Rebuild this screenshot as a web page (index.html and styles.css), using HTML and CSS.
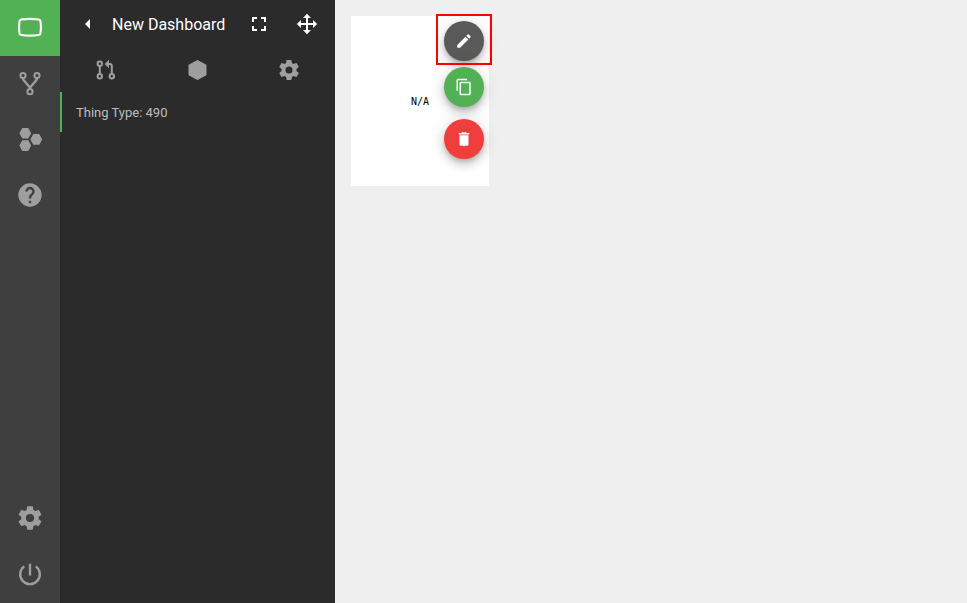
FILE: index.html
```html
<!DOCTYPE html>
<html lang="en">
<head>
<meta charset="utf-8">
<title>New Dashboard</title>
<link rel="stylesheet" href="styles.css">
</head>
<body>
<svg class="defs" aria-hidden="true">
  <symbol id="gear" viewBox="0 0 24 24"><path d="M12,15.5A3.5,3.5 0 0,1 8.5,12A3.5,3.5 0 0,1 12,8.5A3.5,3.5 0 0,1 15.5,12A3.5,3.5 0 0,1 12,15.5M19.43,12.97C19.47,12.65 19.5,12.33 19.5,12C19.5,11.67 19.47,11.34 19.43,11L21.54,9.37C21.73,9.22 21.78,8.95 21.66,8.73L19.66,5.27C19.54,5.05 19.27,4.96 19.05,5.05L16.56,6.05C16.04,5.66 15.5,5.32 14.87,5.07L14.5,2.42C14.46,2.18 14.25,2 14,2H10C9.75,2 9.54,2.18 9.5,2.42L9.13,5.07C8.5,5.32 7.96,5.66 7.44,6.05L4.95,5.05C4.73,4.96 4.46,5.05 4.34,5.27L2.34,8.73C2.21,8.95 2.27,9.22 2.46,9.37L4.57,11C4.53,11.34 4.5,11.67 4.5,12C4.5,12.33 4.53,12.65 4.57,12.97L2.46,14.63C2.27,14.78 2.21,15.05 2.34,15.27L4.34,18.73C4.46,18.95 4.73,19.03 4.95,18.95L7.44,17.94C7.96,18.34 8.5,18.68 9.13,18.93L9.5,21.58C9.54,21.82 9.75,22 10,22H14C14.25,22 14.46,21.82 14.5,21.58L14.87,18.93C15.5,18.67 16.04,18.34 16.56,17.94L19.05,18.95C19.27,19.03 19.54,18.95 19.66,18.73L21.66,15.27C21.78,15.05 21.73,14.78 21.54,14.63L19.43,12.97Z"/></symbol>
</svg>
<div class="app">
  <nav class="rail">
    <a class="rail-item active"><svg class="icon-lg line" viewBox="0 0 28 28"><path d="M5.3 5.5Q14 4.2 22.7 5.5Q24.2 5.7 24.5 7.3Q25.5 13.5 24.5 19.2Q24.2 20.8 22.7 21Q14 22.3 5.3 21Q3.8 20.8 3.5 19.2Q2.5 13.5 3.5 7.3Q3.8 5.7 5.3 5.5Z" stroke-width="2.1"/></svg></a>
    <a class="rail-item"><svg class="icon-lg line" viewBox="0 0 28 28"><circle cx="7" cy="5.5" r="2.6"/><circle cx="21" cy="5.5" r="2.6"/><circle cx="14" cy="21.7" r="2.6"/><path d="M7.2 8V9.5L14 17.7L20.8 9.5V8M14 17V19.5" stroke-width="2.3"/></svg></a>
    <a class="rail-item"><svg class="icon-lg" viewBox="0 0 28 28"><path d="M6.3 1.9H12.3L15.2 7.2L12.3 12.6H6.3L3.4 7.2ZM17.3 8.1H23.3L26.2 13.4L23.3 18.8H17.3L14.4 13.4ZM6.3 14.2H12.3L15.2 19.6L12.3 25H6.3L3.4 19.6Z"/></svg></a>
    <a class="rail-item raised"><svg class="icon-lg" viewBox="0 0 24 24"><path d="M15.07,11.25L14.17,12.17C13.45,12.89 13,13.5 13,15H11V14.5C11,13.39 11.45,12.39 12.17,11.67L13.41,10.41C13.78,10.05 14,9.55 14,9C14,7.89 13.1,7 12,7A2,2 0 0,0 10,9H8A4,4 0 0,1 12,5A4,4 0 0,1 16,9C16,9.88 15.64,10.67 15.07,11.25M13,19H11V17H13M12,2A10,10 0 0,0 2,12A10,10 0 0,0 12,22A10,10 0 0,0 22,12C22,6.47 17.5,2 12,2Z"/></svg></a>
    <span class="spacer"></span>
    <a class="rail-item raised"><svg class="icon-lg"><use href="#gear"/></svg></a>
    <a class="rail-item raised"><svg class="icon-lg line" viewBox="0 0 28 28"><path d="M14 3.8V15.4M8.2 6.4A9.8 9.8 0 1 0 19.8 6.4" stroke-width="2.4"/></svg></a>
  </nav>
  <aside class="panel">
    <header class="panel-head">
      <svg class="icon back" viewBox="0 0 24 24"><path d="M14 7V17L9 12Z"/></svg>
      <h1 class="title">New Dashboard</h1>
      <svg class="icon" viewBox="0 0 24 24"><path d="M5,5H10V7H7V10H5V5M14,5H19V10H17V7H14V5M17,14H19V19H14V17H17V14M10,17V19H5V14H7V17H10Z"/></svg>
      <svg class="icon move" viewBox="0 0 24 24"><path d="M12 1.8L16 6H13V11H18V8L22.2 12L18 16V13H13V18H16L12 22.2L8 18H11V13H6V16L1.8 12L6 8V11H11V6H8Z"/></svg>
    </header>
    <div class="tabs">
      <a class="tab"><svg class="icon line" viewBox="0 0 24 24"><circle cx="5.8" cy="5.8" r="2.2"/><circle cx="5.8" cy="18.2" r="2.2"/><circle cx="17.8" cy="18.2" r="2.2"/><path d="M5.8 8V16M17.8 16V8Q17.8 6 15.8 6H14" stroke-width="2"/><path class="solid" d="M10.6 6L15 1.8V10.2Z"/></svg></a>
      <a class="tab"><svg class="icon" viewBox="0.5 0 24 24"><path d="M21,16.5C21,16.88 20.79,17.21 20.47,17.38L12.57,21.82C12.41,21.94 12.21,22 12,22C11.79,22 11.59,21.94 11.43,21.82L3.53,17.38C3.21,17.21 3,16.88 3,16.5V7.5C3,7.12 3.21,6.79 3.53,6.62L11.43,2.18C11.59,2.06 11.79,2 12,2C12.21,2 12.41,2.06 12.57,2.18L20.47,6.62C20.79,6.79 21,7.12 21,7.5V16.5Z"/></svg></a>
      <a class="tab"><svg class="icon"><use href="#gear"/></svg></a>
    </div>
    <div class="thing">Thing Type: 490</div>
  </aside>
  <main class="canvas">
    <section class="widget">
      <span class="value">N/A</span>
      <div class="actions">
        <button class="fab edit"><svg viewBox="0 0 24 24"><path d="M20.71,7.04C21.1,6.65 21.1,6 20.71,5.63L18.37,3.29C18,2.9 17.35,2.9 16.96,3.29L15.12,5.12L18.87,8.87M3,17.25V21H6.75L17.81,9.93L14.06,6.18L3,17.25Z"/></svg></button>
        <button class="fab copy"><svg viewBox="0 0 24 24"><path d="M19,21H8V7H19M19,5H8A2,2 0 0,0 6,7V21A2,2 0 0,0 8,23H19A2,2 0 0,0 21,21V7A2,2 0 0,0 19,5M16,1H4A2,2 0 0,0 2,3V17H4V3H16V1Z"/></svg></button>
        <button class="fab delete"><svg viewBox="0 0 24 24"><path d="M19,4H15.5L14.5,3H9.5L8.5,4H5V6H19M6,19A2,2 0 0,0 8,21H16A2,2 0 0,0 18,19V7H6V19Z"/></svg></button>
      </div>
      <div class="highlight"></div>
    </section>
  </main>
</div>
</body>
</html>
```
FILE: styles.css
```css
* { box-sizing: border-box; }
body { margin: 0; font-family: Roboto, sans-serif; background: #efefef; }
.defs { position: absolute; width: 0; height: 0; }
svg { display: block; fill: currentColor; flex: none; }
.line { fill: none; stroke: currentColor; stroke-width: 2; }
.solid { fill: currentColor; stroke: none; }
.app { display: flex; height: 100vh; overflow: hidden; }

.rail { width: 60px; display: flex; flex-direction: column; background: #3f3f3f; color: #9e9e9e; }
.rail-item { height: 56px; display: flex; align-items: center; justify-content: center; }
.rail-item.active { background: #52b154; color: #fff; }
.rail-item.raised { padding-bottom: 2px; }
.spacer { flex: 1; }
.icon-lg { width: 28px; height: 28px; }
.icon { width: 24px; height: 24px; }

.panel { width: 275px; background: #2b2b2b; color: #fff; }
.panel-head { height: 48px; display: flex; align-items: center; padding: 0 16px; }
.back { margin-right: 12px; }
.title { flex: 1; margin: 0; padding-top: 2px; font-size: 16px; font-weight: 400; line-height: 24px; white-space: nowrap; }
.move { margin-left: 24px; }
.tabs { height: 44px; display: flex; color: #9e9e9e; }
.tab { flex: 1; display: flex; align-items: center; justify-content: center; }
.thing { height: 40px; padding: 0 14px; border-left: 2px solid #52b154; font-size: 13px; line-height: 41px; color: #bdbdbd; }

.canvas { flex: 1; padding: 16px; background: #efefef; }
.widget { position: relative; width: 138px; height: 170px; background: #fff; display: flex; align-items: center; justify-content: center; }
.value { padding-top: 2px; font: 10px/12px "DejaVu Sans Mono", monospace; color: #000; }
.actions { position: absolute; top: 5px; right: 5px; display: flex; flex-direction: column; }
.fab { width: 40px; height: 40px; padding: 0; border: 0; border-radius: 50%; color: #fff; display: flex; align-items: center; justify-content: center; box-shadow: 0 3px 5px -1px rgba(0,0,0,.2), 0 6px 10px rgba(0,0,0,.14), 0 1px 18px rgba(0,0,0,.12); }
.fab svg { width: 18px; height: 18px; }
.edit { background: #595959; }
.copy { margin-top: 6px; background: #52b154; }
.delete { margin-top: 12px; background: #ef3e3c; }
.highlight { position: absolute; left: 85px; top: -2px; width: 56px; height: 51px; border: 2px solid #f00; }
```
